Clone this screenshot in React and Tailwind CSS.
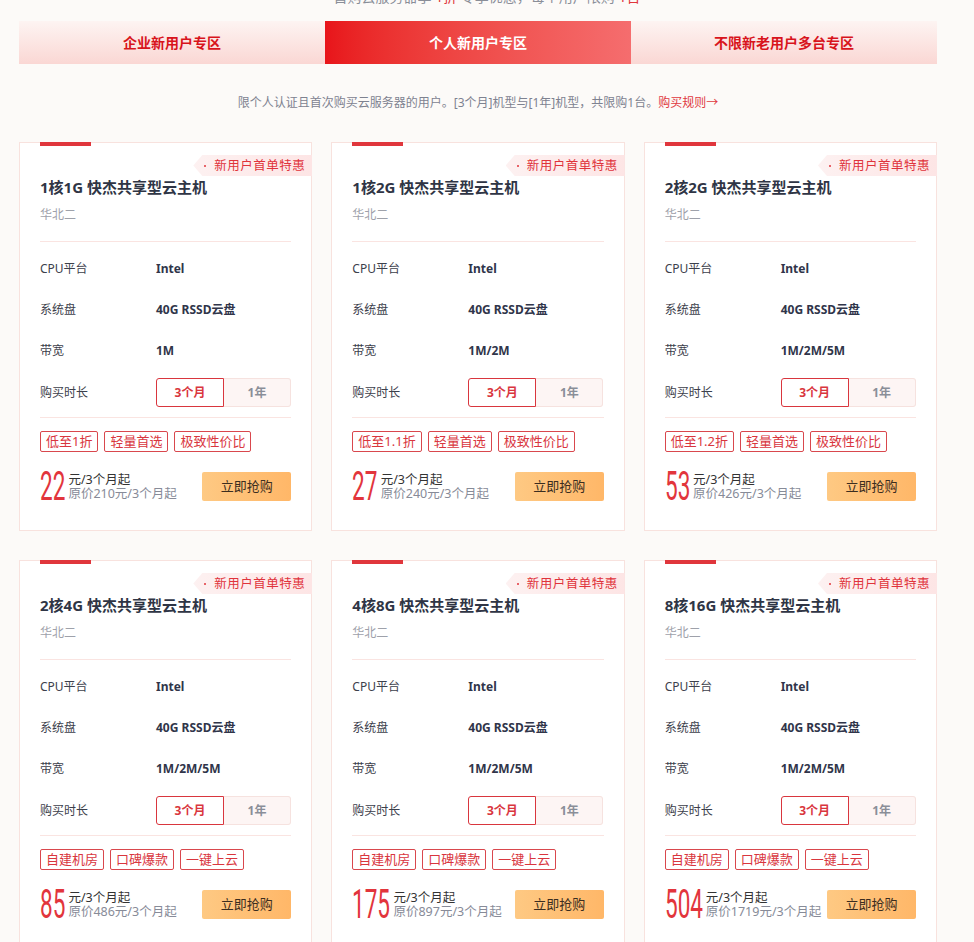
import React from 'react';

const cards = [
  { title: '1核1G 快杰共享型云主机', bw: '1M', tags: ['低至1折', '轻量首选', '极致性价比'], price: '22', orig: '210' },
  { title: '1核2G 快杰共享型云主机', bw: '1M/2M', tags: ['低至1.1折', '轻量首选', '极致性价比'], price: '27', orig: '240' },
  { title: '2核2G 快杰共享型云主机', bw: '1M/2M/5M', tags: ['低至1.2折', '轻量首选', '极致性价比'], price: '53', orig: '426' },
  { title: '2核4G 快杰共享型云主机', bw: '1M/2M/5M', tags: ['自建机房', '口碑爆款', '一键上云'], price: '85', orig: '486' },
  { title: '4核8G 快杰共享型云主机', bw: '1M/2M/5M', tags: ['自建机房', '口碑爆款', '一键上云'], price: '175', orig: '897' },
  { title: '8核16G 快杰共享型云主机', bw: '1M/2M/5M', tags: ['自建机房', '口碑爆款', '一键上云'], price: '504', orig: '1719' },
];

function Card({ c }) {
  return (
    <div className="relative bg-white border border-[#f8e2de] pt-[34px] pb-[29px] pl-[20px] pr-[20px]">
      <div className="absolute -top-px left-[20px] w-[51px] h-[4px] bg-[#e0363c]" />
      <div className="absolute top-[12px] -right-px h-[21px] pl-[11px] pr-[7px] bg-gradient-to-r from-[#fdf1f1] to-[#fde5e5] [clip-path:polygon(9px_0,100%_0,100%_100%,9px_100%,0_50%)] flex items-center whitespace-nowrap">
        <span className="shrink-0 w-[2px] h-[2px] bg-[#e0363c] rounded-full" />
        <span className="shrink-0 ml-[8px] text-[12.5px] leading-[21px] tracking-[0.5px] text-[#e0333b]">新用户首单特惠</span>
      </div>
      <div className="h-[20px] leading-[20px] text-[15px] font-bold text-[#2f3545] whitespace-nowrap">{c.title}</div>
      <div className="mt-[9px] h-[18px] leading-[18px] text-[12px] text-[#9ea1aa]">华北二</div>
      <div className="mt-[17px] h-px bg-[#fae4e1]" />
      <div className="mt-[6px]">
        {[['CPU平台', 'Intel'], ['系统盘', '40G RSSD云盘'], ['带宽', c.bw]].map(([k, v]) => (
          <div key={k} className="h-[41px] flex items-center text-[12px]">
            <span className="w-[116px] text-[#3c404b]">{k}</span>
            <span className="font-bold text-[#30354a]">{v}</span>
          </div>
        ))}
        <div className="pt-[7px] flex items-center text-[12px]">
          <span className="w-[116px] text-[#3c404b]">购买时长</span>
          <div className="flex h-[29px] w-[135px]">
            <div className="w-[68px] h-full flex items-center justify-center border border-[#d9363e] rounded-l-[3px] text-[#d9363e] font-bold bg-white">3个月</div>
            <div className="flex-1 h-full flex items-center justify-center border border-l-0 border-[#f6e2df] rounded-r-[3px] bg-[#fdf5f4] text-[#8a8e98] font-bold">1年</div>
          </div>
        </div>
      </div>
      <div className="mt-[10px] h-px bg-[#fae4e1]" />
      <div className="mt-[13px] flex gap-[6px]">
        {c.tags.map((t) => (
          <span key={t} className="h-[21px] px-[5px] flex items-center border border-[#d9474d] rounded-[2px] text-[13px] text-[#d9363e]">{t}</span>
        ))}
      </div>
      <div className="mt-[20px] flex items-center h-[29px]">
        <span className="inline-block h-[41px] overflow-hidden shrink-0" style={{ width: `${c.price.length * 12.7}px` }}>
          <span className="inline-block origin-left scale-x-[0.55] font-['Roboto',sans-serif] font-normal text-[41px] leading-[41px] text-[#e2353c] whitespace-nowrap">{c.price}</span>
        </span>
        <div className="ml-[3px] flex flex-col text-[12.5px] leading-[14px] whitespace-nowrap">
          <span className="text-[#333]">元/3个月起</span>
          <span className="text-[#878b98]">原价{c.orig}元/3个月起</span>
        </div>
        <button className="ml-auto shrink-0 w-[89px] h-[29px] rounded-[2px] bg-gradient-to-r from-[#fec983] to-[#ffb768] text-[13px] text-[#3b2d1f]">立即抢购</button>
      </div>
    </div>
  );
}

export default function App() {
  return (
    <div className="min-h-screen bg-[#fcfaf8] font-['Noto_Sans','Noto_Sans_CJK_SC',sans-serif]">
      <div className="h-[21px] overflow-hidden flex justify-center">
        <div className="-mt-[10px] h-[14px] leading-[14px] text-[14px] text-[#8a8e98] whitespace-nowrap">
          首购云服务器享 <span className="text-[#e0363c]">1折</span> 专享优惠，每个用户限购 <span className="text-[#e0363c]">1台</span>
        </div>
      </div>
      <div className="ml-[19px] w-[918px]">
        <div className="flex h-[43px]">
          <div className="flex-1 flex items-center justify-center bg-gradient-to-b from-[#fdf4f2] to-[#fad7d4] text-[14px] font-bold text-[#d8141c]">企业新用户专区</div>
          <div className="flex-1 flex items-center justify-center bg-gradient-to-r from-[#e8141a] to-[#f56d6e] text-[14px] font-bold text-white">个人新用户专区</div>
          <div className="flex-1 flex items-center justify-center bg-gradient-to-b from-[#fdf4f2] to-[#fad7d4] text-[14px] font-bold text-[#d8141c]">不限新老用户多台专区</div>
        </div>
        <div className="h-[78px] flex items-center justify-center text-[12px] text-[#7e8290]">
          限个人认证且首次购买云服务器的用户。[3个月]机型与[1年]机型，共限购1台。<span className="text-[#e0393f]">购买规则→</span>
        </div>
        <div className="grid grid-cols-3 gap-x-[19px] gap-y-[29px]">
          {cards.map((c) => (
            <Card key={c.title} c={c} />
          ))}
        </div>
        <div className="h-[40px]" />
      </div>
    </div>
  );
}
